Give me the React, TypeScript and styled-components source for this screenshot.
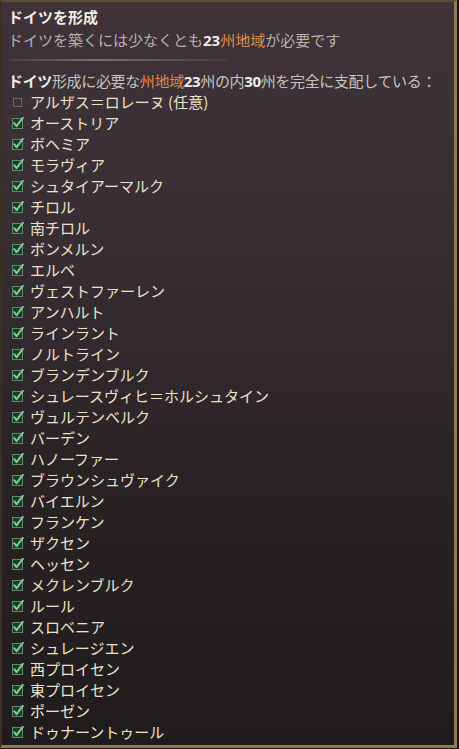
import React from "react";
import styled, { createGlobalStyle } from "styled-components";

const GlobalStyle = createGlobalStyle`
  html, body {
    margin: 0;
    padding: 0;
    background: #16120f;
  }
  body {
    font-family: "Noto Sans CJK JP", "Noto Sans", sans-serif;
  }
`;

type Province = {
  name: string;
  owned: boolean;
};

const provinces: Province[] = [
  { name: "アルザス＝ロレーヌ (任意)", owned: false },
  { name: "オーストリア", owned: true },
  { name: "ボヘミア", owned: true },
  { name: "モラヴィア", owned: true },
  { name: "シュタイアーマルク", owned: true },
  { name: "チロル", owned: true },
  { name: "南チロル", owned: true },
  { name: "ボンメルン", owned: true },
  { name: "エルベ", owned: true },
  { name: "ヴェストファーレン", owned: true },
  { name: "アンハルト", owned: true },
  { name: "ラインラント", owned: true },
  { name: "ノルトライン", owned: true },
  { name: "ブランデンブルク", owned: true },
  { name: "シュレースヴィヒ＝ホルシュタイン", owned: true },
  { name: "ヴュルテンベルク", owned: true },
  { name: "バーデン", owned: true },
  { name: "ハノーファー", owned: true },
  { name: "ブラウンシュヴァイク", owned: true },
  { name: "バイエルン", owned: true },
  { name: "フランケン", owned: true },
  { name: "ザクセン", owned: true },
  { name: "ヘッセン", owned: true },
  { name: "メクレンブルク", owned: true },
  { name: "ルール", owned: true },
  { name: "スロベニア", owned: true },
  { name: "シュレージエン", owned: true },
  { name: "西プロイセン", owned: true },
  { name: "東プロイセン", owned: true },
  { name: "ポーゼン", owned: true },
  { name: "ドゥナーントゥール", owned: true },
];

const CheckIcon = ({ checked }: { checked: boolean }) => (
  <svg width="12" height="12" viewBox="0 0 12 12">
    {checked ? (
      <>
        <rect x="0.5" y="1.5" width="10" height="10" fill="#1f3a2a" stroke="#5b8a69" strokeWidth="1" />
        <path d="M2.2 6.2 L4.6 9.2 L10.8 0.8" fill="none" stroke="#7ad08c" strokeWidth="2" strokeLinecap="round" strokeLinejoin="round" />
      </>
    ) : (
      <rect x="1.5" y="2.5" width="8" height="8" fill="none" stroke="#6e6668" strokeWidth="1" />
    )}
  </svg>
);

export default function App() {
  return (
    <>
      <GlobalStyle />
      <Frame>
        <Panel>
          <Title>ドイツを形成</Title>
          <Subtitle>
            ドイツを築くには少なくとも<Num>23</Num>
            <Accent>州地域</Accent>が必要です
          </Subtitle>
          <Divider />
          <Requirement>
            <Strong>ドイツ</Strong>形成に必要な<Accent>州地域</Accent>
            <Num>23</Num>州の内<Num>30</Num>州を完全に支配している：
          </Requirement>
          <List>
            {provinces.map((p) => (
              <Item key={p.name}>
                <IconBox>
                  <CheckIcon checked={p.owned} />
                </IconBox>
                <ItemName>{p.name}</ItemName>
              </Item>
            ))}
          </List>
        </Panel>
      </Frame>
    </>
  );
}

const Frame = styled.div`
  width: 459px;
  height: 749px;
  box-sizing: border-box;
  padding: 0 2px 1px 0;
  background: #1b1510;
`;

const Panel = styled.div`
  box-sizing: border-box;
  height: 748px;
  width: 457px;
  border-top: 2px solid #5c4c34;
  border-left: 2px solid #3c3022;
  border-right: 3px solid #8e7b54;
  border-bottom: 3px solid #8e7b54;
  background: linear-gradient(180deg, #3f3339 0%, #362d32 35%, #2a2326 62%, #201b1c 100%);
  padding: 4px 6px 0 6px;
  color: #e6dfcc;
  overflow: hidden;
`;

const Title = styled.div`
  font-size: 15px;
  font-weight: 700;
  line-height: 22px;
  color: #f2eee6;
`;

const Subtitle = styled.div`
  font-size: 15px;
  line-height: 22px;
  color: #b9b1ab;
  margin-top: 1px;
`;

const Num = styled.span`
  font-family: "Open Sans", "Noto Sans", sans-serif;
  font-weight: 700;
  color: #f1ede6;
`;

const Strong = styled.span`
  font-weight: 700;
  color: #f1ede6;
`;

const Accent = styled.span`
  color: #dc8c4d;
`;

const Divider = styled.div`
  height: 2px;
  width: 218px;
  margin: 8px 0 9px 2px;
  background: linear-gradient(90deg, rgba(120,106,100,0.2) 0%, #7d6f69 40%, rgba(120,106,100,0.15) 100%);
`;

const Requirement = styled.div`
  font-size: 15px;
  line-height: 22px;
  color: #c9c2bc;
  white-space: nowrap;
  letter-spacing: -0.35px;
`;

const List = styled.div`
  display: flex;
  flex-direction: column;
  margin-top: -1px;
`;

const Item = styled.div`
  display: flex;
  align-items: center;
  height: 21px;
  font-size: 15px;
`;

const IconBox = styled.span`
  display: flex;
  width: 14px;
  margin-left: 4px;
  margin-right: 4px;
`;

const ItemName = styled.span`
  color: #ece2c8;
  white-space: nowrap;
`;
